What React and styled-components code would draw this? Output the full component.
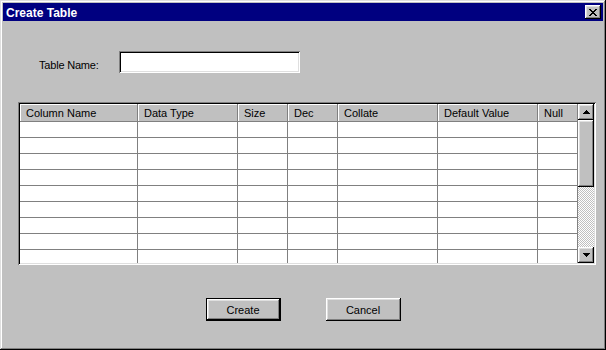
import React from 'react'
import styled, { createGlobalStyle } from 'styled-components'

const GlobalStyle = createGlobalStyle`
  html, body {
    margin: 0;
    padding: 0;
    background: #c0c0c0;
  }
  body {
    font-family: "Liberation Sans", Arial, sans-serif;
    font-size: 11px;
    color: #000;
  }
`

const raised = `
  box-shadow: inset -1px -1px #000, inset 1px 1px #fff,
    inset -2px -2px #808080, inset 2px 2px #dfdfdf;
`

const sunken = `
  box-shadow: inset 1px 1px #808080, inset -1px -1px #fff,
    inset 2px 2px #000, inset -2px -2px #dfdfdf;
`

const columns = [
  { name: 'Column Name', width: 118 },
  { name: 'Data Type', width: 100 },
  { name: 'Size', width: 50 },
  { name: 'Dec', width: 50 },
  { name: 'Collate', width: 100 },
  { name: 'Default Value', width: 100 },
  { name: 'Null', width: 40 },
]

const rows = Array.from({ length: 9 })

const App = () => {
  return (
    <>
      <GlobalStyle />
      <Window>
        <TitleBar>
          <Title>Create Table</Title>
          <CloseButton aria-label="Close">
            <svg width="8" height="7" viewBox="0 0 8 7" shapeRendering="crispEdges">
              <path
                fill="#000"
                d="M0 0h2v1h1v1h2v-1h1v-1h2v1h-1v1h-1v1h-1v1h1v1h1v1h1v1h-2v-1h-1v-1h-2v1h-1v1h-2v-1h1v-1h1v-1h1v-1h-1v-1h-1v-1h-1z"
              />
            </svg>
          </CloseButton>
        </TitleBar>

        <Body>
          <NameRow>
            <Label>Table Name:</Label>
            <TextInput />
          </NameRow>

          <GridFrame>
            <TableArea>
              <HeaderRow>
                {columns.map((c) => (
                  <HeaderCell key={c.name} $w={c.width}>{c.name}</HeaderCell>
                ))}
              </HeaderRow>
              {rows.map((_, i) => (
                <Row key={i}>
                  {columns.map((c) => (
                    <Cell key={c.name} $w={c.width} />
                  ))}
                </Row>
              ))}
            </TableArea>
            <Scrollbar>
              <ScrollButton>
                <svg width="7" height="4" viewBox="0 0 7 4" shapeRendering="crispEdges">
                  <path fill="#000" d="M3 0h1v1h1v1h1v1h1v1h-7v-1h1v-1h1v-1h1z" />
                </svg>
              </ScrollButton>
              <Thumb />
              <Track />
              <ScrollButton>
                <svg width="7" height="4" viewBox="0 0 7 4" shapeRendering="crispEdges">
                  <path fill="#000" d="M0 0h7v1h-1v1h-1v1h-1v1h-1v-1h-1v-1h-1v-1h-1z" />
                </svg>
              </ScrollButton>
            </Scrollbar>
          </GridFrame>

          <ButtonRow>
            <Button $default>Create</Button>
            <Button>Cancel</Button>
          </ButtonRow>
        </Body>
      </Window>
    </>
  )
}

export default App

const Window = styled.div`
  width: 606px;
  height: 350px;
  box-sizing: border-box;
  padding: 3px;
  background: #c0c0c0;
  display: flex;
  flex-direction: column;
  box-shadow: inset -1px -1px #000, inset 1px 1px #dfdfdf,
    inset -2px -2px #808080, inset 2px 2px #fff;
`

const TitleBar = styled.div`
  height: 18px;
  background: #000080;
  color: #fff;
  display: flex;
  align-items: center;
  justify-content: space-between;
  padding: 0 2px 0 3px;
`

const Title = styled.span`
  font-weight: bold;
  font-size: 12px;
  padding-top: 1px;
`

const CloseButton = styled.div`
  width: 16px;
  height: 14px;
  background: #c0c0c0;
  display: flex;
  align-items: center;
  justify-content: center;
  ${raised}
`

const Body = styled.div`
  flex: 1;
  display: flex;
  flex-direction: column;
`

const NameRow = styled.div`
  display: flex;
  align-items: center;
  margin-top: 30px;
  padding-left: 36px;
`

const Label = styled.span`
  width: 80px;
  padding-top: 6px;
  letter-spacing: -0.2px;
`

const TextInput = styled.div`
  width: 181px;
  height: 22px;
  background: #fff;
  ${sunken}
`

const GridFrame = styled.div`
  margin: 29px 0 0 15px;
  width: 578px;
  height: 163px;
  box-sizing: border-box;
  padding: 2px;
  display: flex;
  background: #fff;
  ${sunken}
`

const TableArea = styled.div`
  flex: 1;
  overflow: hidden;
`

const HeaderRow = styled.div`
  display: flex;
  height: 18px;
`

const HeaderCell = styled.div`
  width: ${(p) => p.$w}px;
  box-sizing: border-box;
  padding-left: 6px;
  line-height: 18px;
  background: #c0c0c0;
  white-space: nowrap;
  box-shadow: inset -1px -1px #808080, inset 1px 1px #fff;
`

const Row = styled.div`
  display: flex;
  height: 16px;
`

const Cell = styled.div`
  width: ${(p) => p.$w}px;
  box-sizing: border-box;
  background: #fff;
  border-right: 1px solid #808080;
  border-bottom: 1px solid #808080;
`

const Scrollbar = styled.div`
  width: 16px;
  display: flex;
  flex-direction: column;
`

const ScrollButton = styled.div`
  height: 16px;
  background: #c0c0c0;
  display: flex;
  align-items: center;
  justify-content: center;
  ${raised}
`

const Thumb = styled.div`
  height: 67px;
  background: #c0c0c0;
  ${raised}
`

const Track = styled.div`
  flex: 1;
  background: repeating-conic-gradient(#c0c0c0 0 25%, #fff 0 50%) 0 0 / 2px 2px;
`

const ButtonRow = styled.div`
  display: flex;
  justify-content: center;
  gap: 45px;
  margin-top: 33px;
`

const Button = styled.div`
  width: 75px;
  height: 23px;
  box-sizing: border-box;
  display: flex;
  align-items: center;
  justify-content: center;
  background: #c0c0c0;
  border: ${(p) => (p.$default ? '1px solid #000' : 'none')};
  ${raised}
`
